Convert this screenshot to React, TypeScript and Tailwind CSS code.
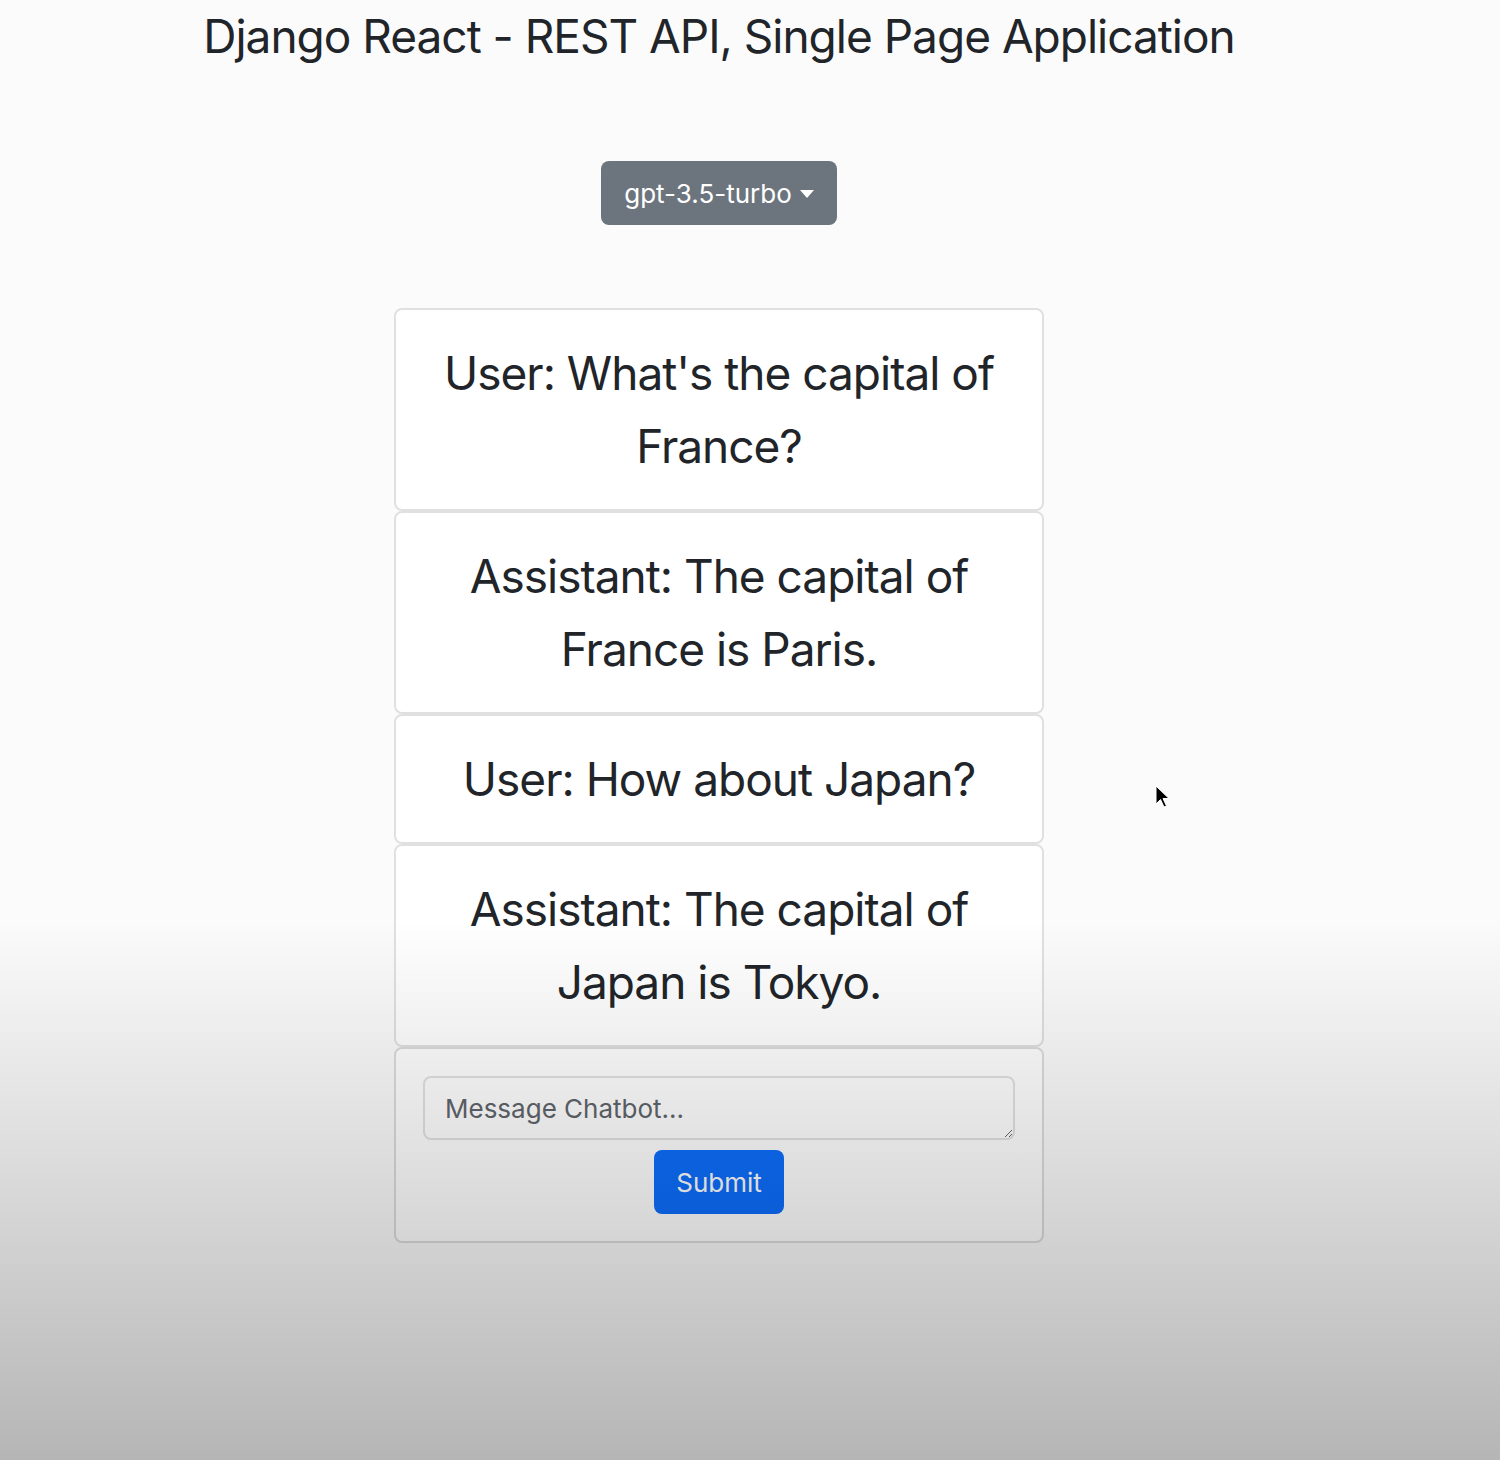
import React from 'react';

const messages = [
  "User: What's the capital of France?",
  'Assistant: The capital of France is Paris.',
  'User: How about Japan?',
  'Assistant: The capital of Japan is Tokyo.',
];

export default function App() {
  return (
    <div className="relative min-h-[1460px] w-full overflow-hidden bg-[#fbfbfb] text-[#212529] [font-family:Inter,'Noto_Sans',sans-serif]">
      <div className="flex w-[1438px] flex-col items-center">
        {/* Page title */}
        <h1 className="mt-[6px] text-[46px] leading-[60px] font-normal tracking-[-1px]">
          Django React - REST API, Single Page Application
        </h1>

        {/* Model dropdown */}
        <button className="mt-[95px] flex h-[64px] w-[236px] items-center justify-center gap-[8px] rounded-[8px] bg-[#6c757d] text-[26px] text-white">
          <span>gpt-3.5-turbo</span>
          <span className="mt-[2px] h-0 w-0 border-x-[7px] border-t-[8px] border-x-transparent border-t-white" />
        </button>

        {/* Conversation */}
        <div className="mt-[83px] flex w-[650px] flex-col">
          {messages.map((m, i) => (
            <div
              key={i}
              className="rounded-[8px] border-2 border-[#e0e0e0] bg-white px-[40px] py-[26.5px] text-center text-[46px] leading-[73px] tracking-[-1px]"
            >
              {m}
            </div>
          ))}

          {/* Input form */}
          <div className="flex flex-col items-center rounded-[8px] border-2 border-[#dcdcdc] bg-white px-[27px] pt-[27px] pb-[27px]">
            <textarea
              placeholder="Message Chatbot..."
              className="h-[64px] w-full resize-y rounded-[8px] border-2 border-[#e2e2e2] bg-transparent px-[20px] py-[14px] text-[26px] leading-[34px] outline-none placeholder:text-[#5f656b]"
            />
            <button className="mt-[10px] h-[64px] w-[130px] rounded-[8px] bg-[#0d6efd] text-[26px] text-white">
              Submit
            </button>
          </div>
        </div>
      </div>

      {/* Mouse pointer */}
      <svg className="absolute top-[785px] left-[1155px]" width="16" height="26" viewBox="0 0 16 26">
        <path d="M1 1 L1 19 L5.5 14.5 L9 22 L11.5 21 L8 13.5 L14 13.5 Z" fill="#000" stroke="#fff" strokeWidth="1" />
      </svg>

      {/* Video vignette fading the lower page to grey */}
      <div className="pointer-events-none absolute inset-0 bg-[linear-gradient(to_bottom,transparent_63%,rgba(0,0,0,0.28)_100%)]" />
    </div>
  );
}
